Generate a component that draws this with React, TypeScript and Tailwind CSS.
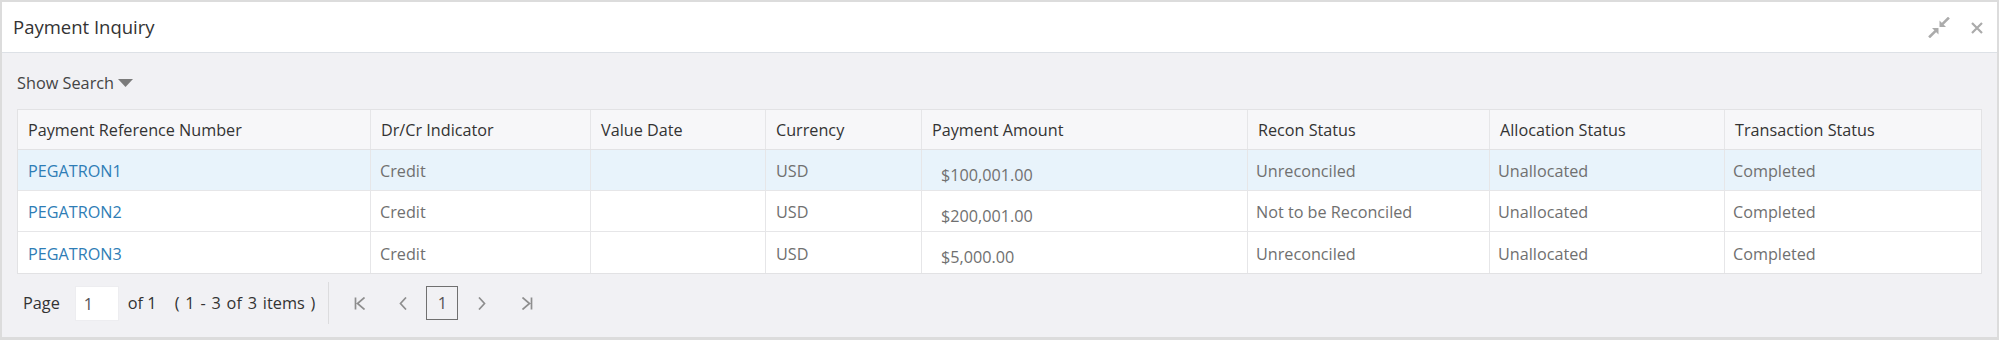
import React from "react";

const cols = [
  "Payment Reference Number",
  "Dr/Cr Indicator",
  "Value Date",
  "Currency",
  "Payment Amount",
  "Recon Status",
  "Allocation Status",
  "Transaction Status",
];

const rows = [
  { ref: "PEGATRON1", ind: "Credit", date: "", cur: "USD", amt: "$100,001.00", recon: "Unreconciled", alloc: "Unallocated", tx: "Completed" },
  { ref: "PEGATRON2", ind: "Credit", date: "", cur: "USD", amt: "$200,001.00", recon: "Not to be Reconciled", alloc: "Unallocated", tx: "Completed" },
  { ref: "PEGATRON3", ind: "Credit", date: "", cur: "USD", amt: "$5,000.00", recon: "Unreconciled", alloc: "Unallocated", tx: "Completed" },
];

const grid =
  "grid grid-cols-[352px_220px_175px_156px_326px_242px_235px_255px]";

function CompressIcon() {
  return (
    <svg width="22" height="21" viewBox="0 0 22 21" fill="none">
      <g stroke="#ababab" strokeWidth="2.6" strokeLinecap="square">
        <line x1="20" y1="1.5" x2="15" y2="6.5" />
        <line x1="2" y1="19.5" x2="7" y2="14.5" />
      </g>
      <g fill="#ababab">
        <polygon points="11.5,10 11.5,3.5 18,10" />
        <polygon points="10.5,11 10.5,17.5 4,11" />
      </g>
    </svg>
  );
}

function CloseIcon() {
  return (
    <svg width="12" height="12" viewBox="0 0 12 12">
      <path d="M1 1 L11 11 M11 1 L1 11" stroke="#ababab" strokeWidth="2.2" />
    </svg>
  );
}

function Chevron({ dir, bar }: { dir: "left" | "right"; bar?: boolean }) {
  const d =
    dir === "left"
      ? bar
        ? "M1.5 0.5 V12.5 M10.5 0.5 L3.5 6.5 L10.5 12.5"
        : "M7 0.5 L1.5 6.5 L7 12.5"
      : bar
      ? "M9.5 0.5 V12.5 M0.5 0.5 L7.5 6.5 L0.5 12.5"
      : "M1 0.5 L6.5 6.5 L1 12.5";
  const w = bar ? 11 : 8;
  return (
    <svg width={w} height="13" viewBox={`0 0 ${w} 13`} fill="none">
      <path d={d} stroke="#8e8e8e" strokeWidth="1.7" />
    </svg>
  );
}

export default function App() {
  return (
    <div className="w-[1999px] h-[340px] bg-[#dcdcdc] pt-[2px] pl-[2px] pr-[2px] pb-[3px] font-['Open_Sans',sans-serif]">
      <div className="flex h-full flex-col bg-[#f1f1f4]">
        {/* title bar */}
        <div className="flex h-[51px] shrink-0 items-center justify-between border-b border-[#dde1e6] bg-white pl-[11px] pr-[14px]">
          <span className="text-[18.5px] text-[#333333]">Payment Inquiry</span>
          <div className="flex items-center gap-[21px]">
            <button title="Restore">
              <CompressIcon />
            </button>
            <button title="Close" className="mt-[2px]">
              <CloseIcon />
            </button>
          </div>
        </div>

        <div className="flex flex-col px-[15px]">
          {/* search toggle */}
          <button className="mt-[18px] flex h-[24px] items-center gap-[4px] self-start text-[16.3px] text-[#444444]">
            Show Search
            <svg width="15" height="8" viewBox="0 0 15 8">
              <polygon points="0,0 15,0 7.5,8" fill="#7b7b7b" />
            </svg>
          </button>

          {/* table */}
          <div className="mt-[14px] border border-[#e2e2e4] bg-white">
            <div className={`${grid} h-[40px] border-b border-[#e2e2e4] bg-[#f7f7f9] text-[16.2px] text-[#333333]`}>
              {cols.map((c, i) => (
                <div
                  key={c}
                  className={`flex items-center px-[10px] pt-[2px] ${i > 0 ? "border-l border-[#e6e6e8]" : ""}`}
                >
                  {c}
                </div>
              ))}
            </div>
            {rows.map((r, ri) => (
              <div
                key={r.ref}
                className={`${grid} h-[41px] text-[16.2px] text-[#707070] ${ri < rows.length - 1 ? "border-b border-[#e6e6e8]" : ""} ${ri === 0 ? "bg-[#e8f3fb]" : "bg-white"}`}
              >
                <div className="flex items-center px-[10px] pt-[3px] text-[#2e7db6]">{r.ref}</div>
                <div className="flex items-center border-l border-[#e6e6e8] px-[9px] pt-[3px]">{r.ind}</div>
                <div className="flex items-center border-l border-[#e6e6e8] px-[10px] pt-[3px]">{r.date}</div>
                <div className="flex items-center border-l border-[#e6e6e8] px-[10px] pt-[3px]">{r.cur}</div>
                <div className="flex items-center border-l border-[#e6e6e8] pl-[19px] pt-[10px]">{r.amt}</div>
                <div className="flex items-center border-l border-[#e6e6e8] px-[8px] pt-[3px]">{r.recon}</div>
                <div className="flex items-center border-l border-[#e6e6e8] px-[8px] pt-[3px]">{r.alloc}</div>
                <div className="flex items-center border-l border-[#e6e6e8] px-[8px] pt-[3px]">{r.tx}</div>
              </div>
            ))}
          </div>

          {/* pager */}
          <div className="mt-[8px] flex h-[42px] items-center pl-[6px] text-[16.3px] text-[#333333]">
            <span>Page</span>
            <div className="ml-[15px] flex h-[35px] w-[44px] items-end border border-[#ededf0] bg-white pb-[3px] pl-[8px] text-[#555555]">
              1
            </div>
            <span className="ml-[9px]">of 1</span>
            <span className="ml-[18px] [word-spacing:1.6px]">( 1 - 3 of 3 items )</span>
            <div className="ml-[13px] h-[42px] w-px bg-[#dcdcde]" />
            <div className="ml-[25px] flex items-center">
              <Chevron dir="left" bar />
              <div className="ml-[34px]">
                <Chevron dir="left" />
              </div>
              <div className="ml-[19px] flex h-[34px] w-[32px] items-center justify-center border border-[#707070] text-[#555555]">
                1
              </div>
              <div className="ml-[20px]">
                <Chevron dir="right" />
              </div>
              <div className="ml-[36px]">
                <Chevron dir="right" bar />
              </div>
            </div>
          </div>
        </div>
      </div>
    </div>
  );
}
